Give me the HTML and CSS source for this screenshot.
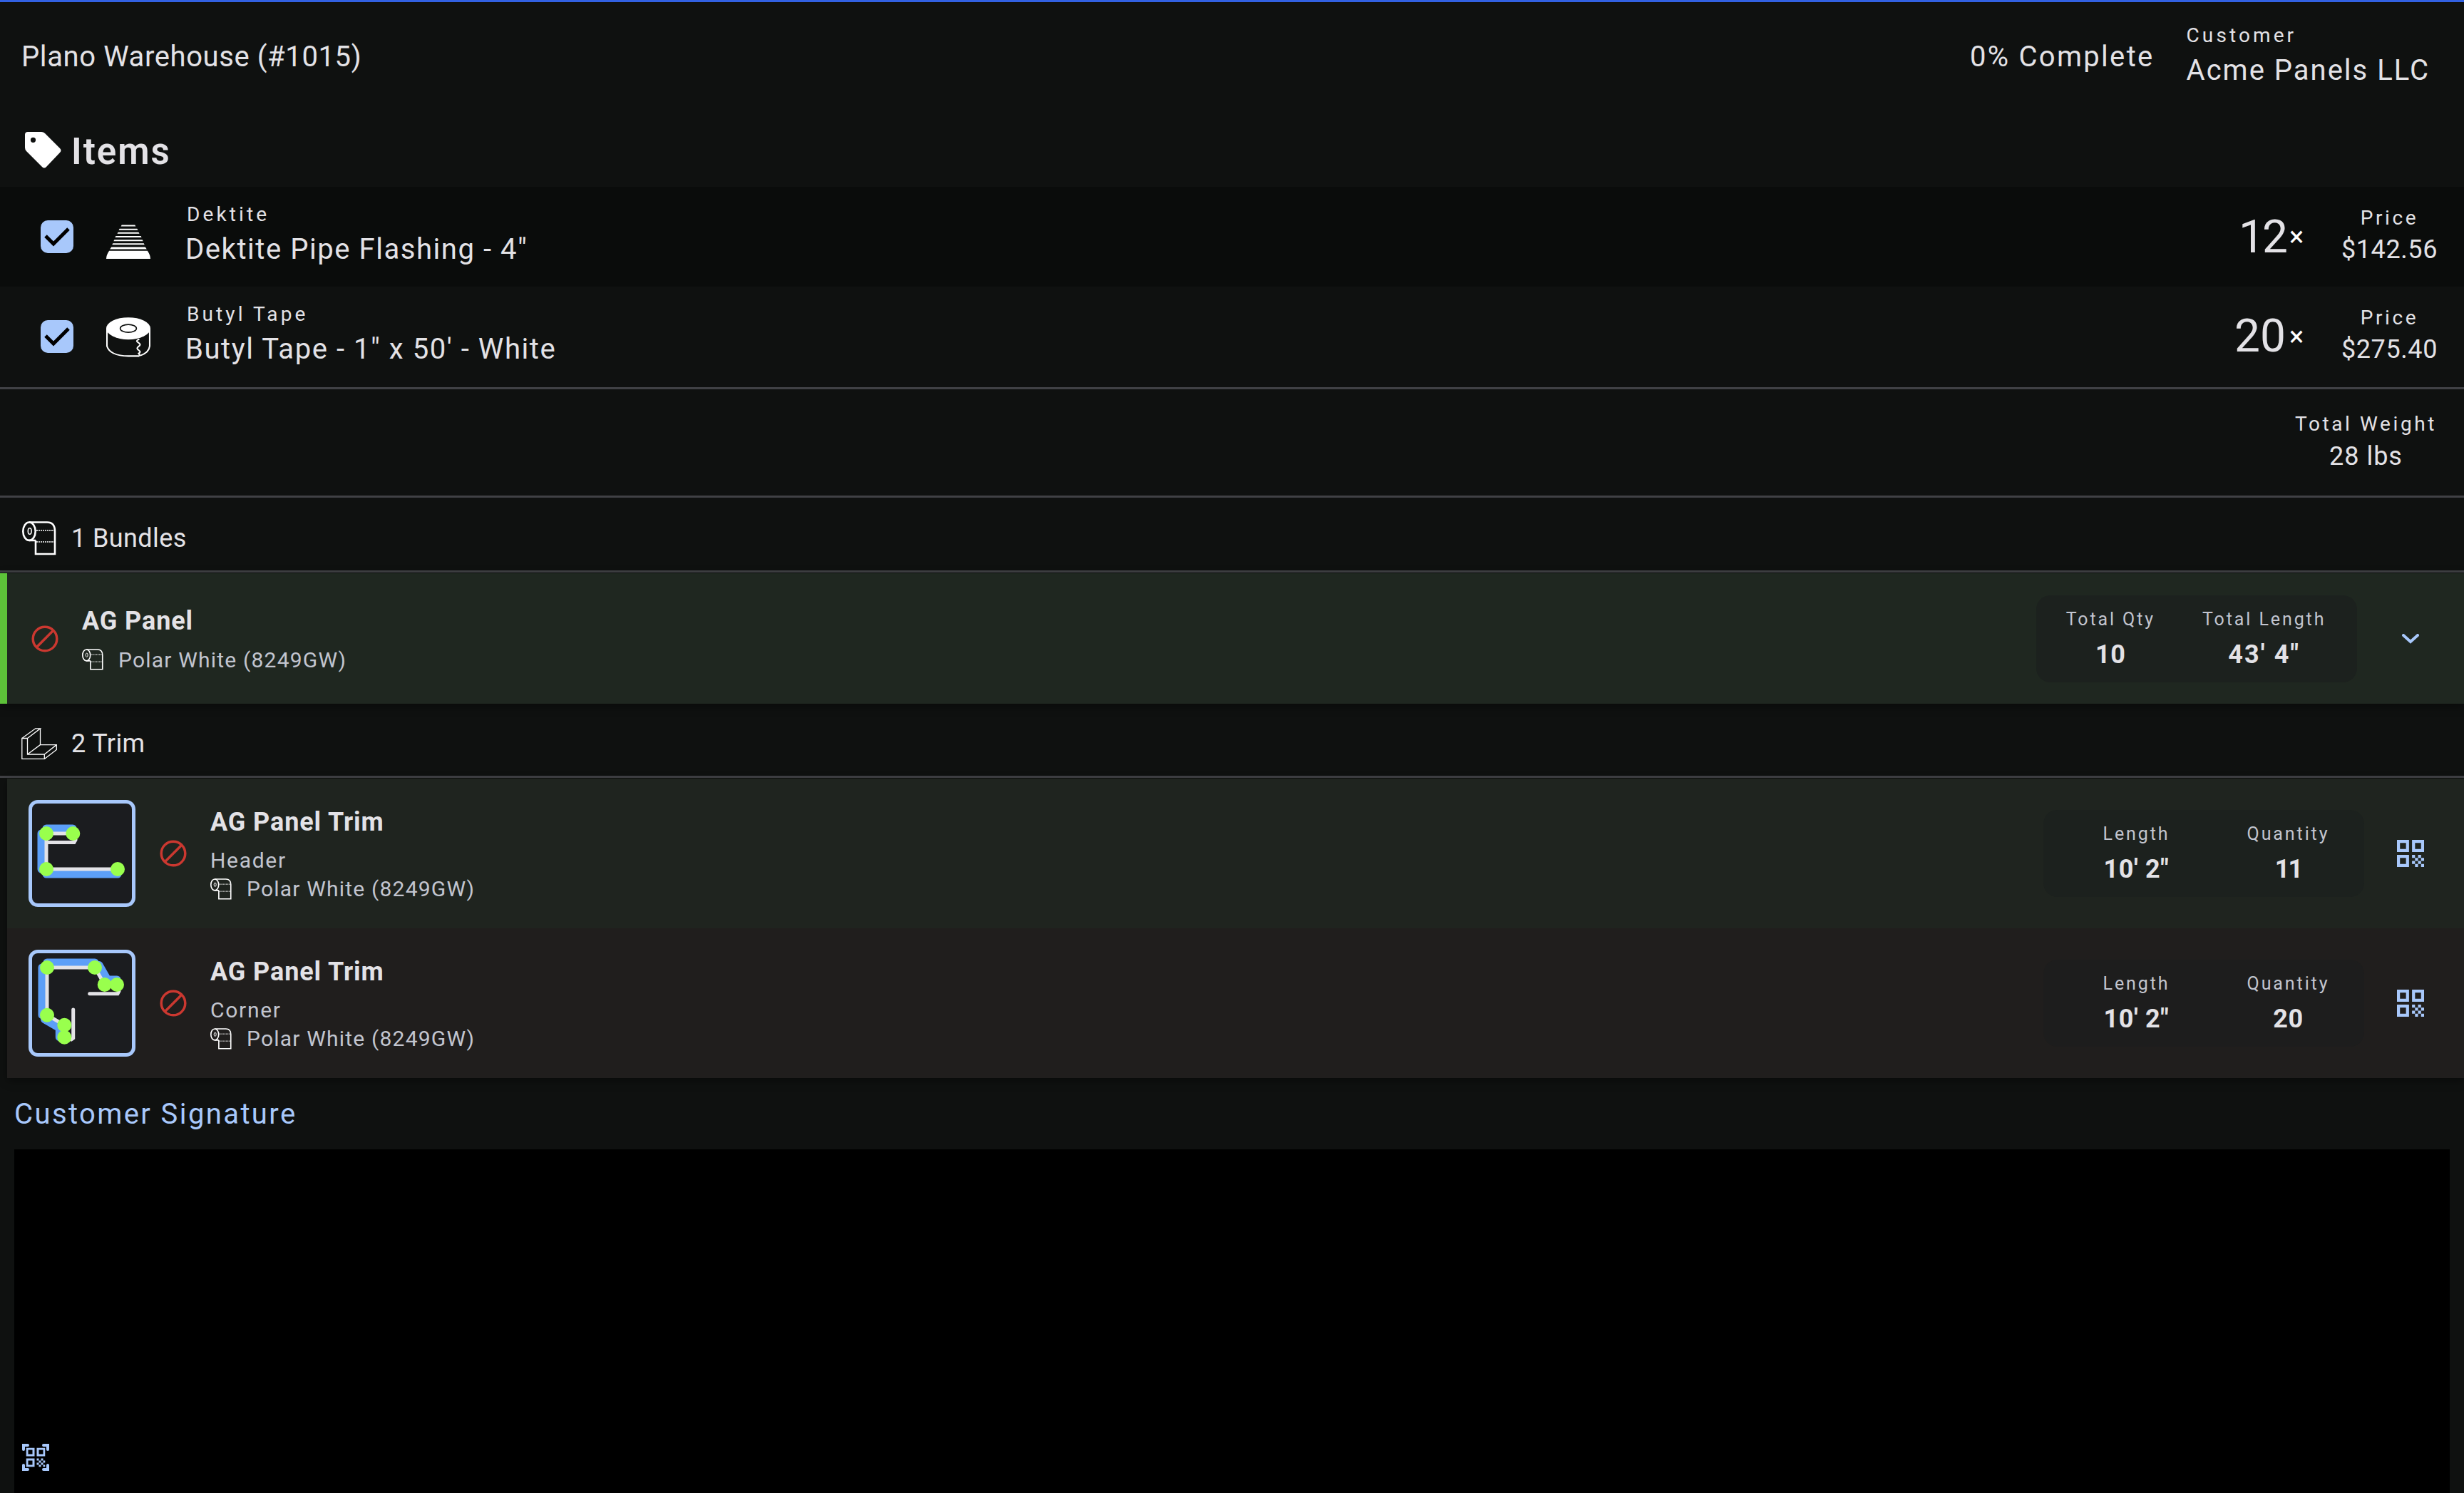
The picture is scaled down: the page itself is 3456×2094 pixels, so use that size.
FILE: index.html
```html
<!DOCTYPE html>
<html lang="en">
<head>
    <meta charset="UTF-8">
    <title>Plano Warehouse (#1015)</title>
    <link rel="stylesheet" href="styles.css">
</head>
<body>
    <svg class="defs" width="0" height="0">
        <symbol id="roll" viewBox="0 0 48 48" fill="none" stroke="#fff">
            <path d="M10 1.500H35Q46 1.500 46 14V46H19V27M10 27H19" stroke-width="2.6"/>
            <ellipse cx="10" cy="14.200" rx="8.700" ry="12.700" stroke-width="2.6"/>
            <ellipse cx="10.700" cy="14" rx="2.4" ry="4.2" stroke-width="1.6"/>
            <path d="M20 13H46M20 29H46" stroke-width="1.6" stroke-dasharray="2 1"/>
        </symbol>
        <symbol id="block" viewBox="0 0 24 24" fill="none" stroke="#cb3830" stroke-width="2.2">
            <circle cx="12" cy="12" r="10.6"/>
            <path d="M4.3 19.7L19.7 4.3"/>
        </symbol>
        <symbol id="qr" viewBox="0 0 18 18">
            <path fill="#a8c8fb" fill-rule="evenodd" d="M0 0h8v8H0zM2 2v4h4V2zM10 0h8v8h-8zM12 2v4h4V2zM0 10h8v8H0zM2 12v4h4v-4zM10 10h2v2h-2zM14 10h2v2h-2zM12 12h2v2h-2zM16 12h2v2h-2zM10 14h2v2h-2zM14 14h2v2h-2zM12 16h2v2h-2zM16 16h2v2h-2z"/>
        </symbol>
    </svg>
    <div class="header">
        <div class="job">Plano Warehouse (#1015)</div>
        <div class="complete">0% Complete</div>
        <div class="customer">
            <div class="label">Customer</div>
            <div class="name">Acme Panels LLC</div>
        </div>
    </div>
    <div class="items-title">
        <svg class="tag" viewBox="0 0 52 52"><path fill="#fff" fill-rule="evenodd" d="M5 1H24Q27 1 29 3L50 24Q53 27 50 30L31 50Q28 53 25 50L3 28Q1 26 1 23V5Q1 1 5 1ZM12.500 8.700A3.600 3.600 0 1 0 12.500 15.900A3.600 3.600 0 1 0 12.500 8.700Z"/></svg>
        <h1>Items</h1>
    </div>
    <div class="item dark">
        <svg class="check" viewBox="0 0 46 46"><rect width="46" height="46" rx="10" fill="#a8c8fb"/><path d="M7 22L18 33L39 12" fill="none" stroke="#000" stroke-width="5"/></svg>
        <svg class="item-icon" viewBox="0 -6 60 60"><path fill="#fff" d="M21 8H39L40 10H20ZM18 13H42L43 15H17ZM16 18H44L45 20H15ZM13 23H47L48 25H12ZM11 28H49L50 30H10ZM9 33H51L52 35H8ZM7 38H53L55 41H5ZM4 43H56Q60 49 60 54H0Q0 49 4 43Z"/></svg>
        <div class="item-text">
            <div class="label">Dektite</div>
            <div class="name">Dektite Pipe Flashing - 4"</div>
        </div>
        <div class="count one">12</div><div class="times">×</div>
        <div class="price"><div class="label">Price</div><div class="value">$142.56</div></div>
    </div>
    <div class="item last">
        <svg class="check" viewBox="0 0 46 46"><rect width="46" height="46" rx="10" fill="#a8c8fb"/><path d="M7 22L18 33L39 12" fill="none" stroke="#000" stroke-width="5"/></svg>
        <svg class="item-icon" viewBox="0 -1 60 60"><ellipse cx="30" cy="18" rx="30" ry="15" fill="#fff"/><ellipse cx="30" cy="18" rx="11" ry="5.3" fill="#fff" stroke="#0f1110" stroke-width="1.6"/><path d="M1 18V42Q5 55 30 55.500H45M46 55Q58 51 59 42V18M44 32v1q-5 2 0 4.500q4 2.500 0 5t0 5q4 2.500 0 4.500l2 3" fill="none" stroke="#fff" stroke-width="2"/></svg>
        <div class="item-text">
            <div class="label">Butyl Tape</div>
            <div class="name">Butyl Tape - 1" x 50' - White</div>
        </div>
        <div class="count">20</div><div class="times">×</div>
        <div class="price"><div class="label">Price</div><div class="value">$275.40</div></div>
    </div>
    <div class="weight">
        <div class="price"><div class="label">Total Weight</div><div class="value">28 lbs</div></div>
    </div>
    <div class="section">
        <svg class="section-icon"><use href="#roll"/></svg>
        <h2>1 Bundles</h2>
    </div>
    <div class="bundle">
        <svg class="block"><use href="#block"/></svg>
        <div class="details">
            <h3>AG Panel</h3>
            <div class="color"><svg><use href="#roll"/></svg><span>Polar White (8249GW)</span></div>
        </div>
        <div class="stats">
            <div class="stat"><div class="stat-label">Total Qty</div><b>10</b></div>
            <div class="stat"><div class="stat-label">Total Length</div><b class="total">43' 4"</b></div>
        </div>
        <svg class="chevron" viewBox="0 0 24 14"><path d="M2 2L12 11L22 2" fill="none" stroke="#a8c8fb" stroke-width="4" stroke-linecap="round"/></svg>
    </div>
    <div class="section trim-title">
        <svg class="section-icon" viewBox="0 0 50 44" fill="none" stroke="#fff" stroke-width="1.3"><path d="M.8 14.500H8.500V37H32.300V43.400H.8ZM.8 14.500L19.700 .8H26.500L8.500 14.500M26.500 .8V23.600L8.500 37M26 23.600H49.300L32.300 37M49.300 23.600V30.500L32.300 43.400"/></svg>
        <h2>2 Trim</h2>
    </div>
    <div class="trims">
        <div class="trim green">
            <svg class="profile" viewBox="0 0 140 140" fill="none" stroke-linecap="round">
                <path d="M20 35H57M13 42V92M20 99H120" stroke="#5c9ff8" stroke-width="11"/>
                <path d="M57 42H20V92H120M20 54.500H59L61 51" stroke="#e3e2e6" stroke-width="5"/>
                <g fill="#99ff4d"><circle cx="20" cy="42" r="10"/><circle cx="57.300" cy="42" r="10"/><circle cx="20" cy="92" r="10"/><circle cx="120" cy="92" r="10"/></g>
            </svg>
            <svg class="block"><use href="#block"/></svg>
            <div class="details">
                <h3>AG Panel Trim</h3>
                <div class="kind">Header</div>
                <div class="color"><svg><use href="#roll"/></svg><span>Polar White (8249GW)</span></div>
            </div>
            <div class="stats">
                <div class="stat"><div class="stat-label">Length</div><b>10' 2"</b></div>
                <div class="stat"><div class="stat-label">Quantity</div><b class="eleven">11</b></div>
            </div>
            <svg class="qr"><use href="#qr"/></svg>
        </div>
        <div class="trim brown">
            <svg class="profile" viewBox="0 0 140 140" fill="none" stroke-linecap="round">
                <path d="M21 13H88M14 20V86.700M94 16.500L107.700 40.500M102 37H119M17.500 92.700L41.700 106.700M38.300 101V117.700" stroke="#5c9ff8" stroke-width="11"/>
                <path d="M119 44H101.700L88 20H21V86.700L45.300 100.700V117.700M80.700 56.700H120L122 53M57.700 79V119L55 121" stroke="#e3e2e6" stroke-width="5"/>
                <g fill="#99ff4d"><circle cx="21" cy="20" r="10"/><circle cx="88" cy="20" r="10"/><circle cx="101.700" cy="44" r="10"/><circle cx="119" cy="44" r="10"/><circle cx="21" cy="86.700" r="10"/><circle cx="45.300" cy="100.700" r="10"/><circle cx="45.300" cy="117.700" r="10"/></g>
            </svg>
            <svg class="block"><use href="#block"/></svg>
            <div class="details">
                <h3>AG Panel Trim</h3>
                <div class="kind">Corner</div>
                <div class="color"><svg><use href="#roll"/></svg><span>Polar White (8249GW)</span></div>
            </div>
            <div class="stats">
                <div class="stat"><div class="stat-label">Length</div><b>10' 2"</b></div>
                <div class="stat"><div class="stat-label">Quantity</div><b>20</b></div>
            </div>
            <svg class="qr"><use href="#qr"/></svg>
        </div>
    </div>
    <h2 class="signature-title">Customer Signature</h2>
    <div class="signature"></div>
    <svg class="scan" viewBox="0 0 38 38"><path d="M2 8V2H8M30 2H36V8M36 30V36H30M8 36H2V30" fill="none" stroke="#a8c8fb" stroke-width="4" stroke-linecap="round"/><use href="#qr" x="5.500" y="5.500" width="27" height="27"/></svg>
</body>
</html>
```

FILE: styles.css
```css
* {
    box-sizing: border-box;
}
body {
    margin: 0;
    height: 2094px;
    overflow: hidden;
    display: flex;
    flex-direction: column;
    border-top: 3px solid #3261e2;
    background: #0f1110;
    color: #e3e2e6;
    font-family: Roboto, sans-serif;
    white-space: nowrap;
}
body > * {
    flex-shrink: 0;
}
h1, h2, h3 {
    margin: 0;
}
.defs {
    position: absolute;
}
.header {
    display: flex;
    align-items: center;
    height: 153px;
    padding: 0 48px 0 30px;
    font-size: 40px;
}
.job {
    flex: 1;
    letter-spacing: 0.6px;
}
.complete {
    margin-right: 45px;
    letter-spacing: 2.3px;
}
.label {
    font-size: 28px;
    line-height: 36px;
    letter-spacing: 4.1px;
}
.name {
    font-size: 40px;
    line-height: 61px;
    letter-spacing: 1.55px;
}
.customer {
    padding-top: 2px;
}
.customer .name {
    letter-spacing: 2px;
}
.items-title {
    display: flex;
    align-items: center;
    height: 106px;
    padding: 6px 34px 0;
    gap: 14px;
}
.tag {
    width: 52px;
    height: 52px;
    margin-bottom: 4px;
}
h1 {
    font-size: 51px;
    font-weight: 600;
    letter-spacing: 2px;
}
.item {
    display: flex;
    align-items: center;
    height: 140px;
    padding: 0 37px 0 57px;
}
.dark {
    background: #0a0c0b;
}
.last {
    height: 141px;
    padding-bottom: 2px;
}
.check {
    width: 46px;
    height: 46px;
}
.item-icon {
    width: 62px;
    height: 62px;
    margin: 0 49px 0 46px;
}
.item-text {
    flex: 1;
}
.item-text .label {
    padding-left: 2px;
    margin-top: -1px;
}
.count {
    font-size: 64px;
}
.one {
    letter-spacing: -3px;
}
.times {
    width: 22px;
    margin: 0 51px 0 5px;
    color: #fff;
    font-size: 38px;
}
.price {
    text-align: center;
}
.price .label {
    letter-spacing: 3.6px;
}
.value {
    font-size: 36px;
    line-height: 52px;
    letter-spacing: 0.6px;
}
.weight {
    display: flex;
    justify-content: flex-end;
    align-items: center;
    height: 155px;
    padding: 3px 38px 0 0;
    border-top: 3px solid #404145;
    border-bottom: 3px solid #404145;
}
.weight .value {
    line-height: 54px;
    letter-spacing: 1px;
}
.section {
    display: flex;
    align-items: center;
    height: 105px;
    margin-bottom: 1px;
    padding: 11px 0 0 30px;
    gap: 20px;
    border-bottom: 3px solid #404145;
}
.trim-title {
    height: 104px;
}
.section-icon {
    width: 50px;
    height: 48px;
}
h2 {
    font-size: 36px;
    font-weight: 400;
    letter-spacing: 0.4px;
}
.bundle {
    display: flex;
    align-items: center;
    height: 183px;
    padding-left: 34px;
    border-left: 10px solid #5dc239;
    background: #1f2720;
    box-shadow: 0 4px 12px rgba(0, 0, 0, 0.4);
}
.block {
    width: 38px;
    height: 38px;
}
.details {
    flex: 1;
    padding-left: 33px;
}
h3 {
    margin-bottom: 10px;
    padding-top: 1px;
    font-size: 36px;
    line-height: 48px;
    font-weight: 700;
    letter-spacing: 0.9px;
}
.color {
    display: flex;
    align-items: center;
    gap: 21px;
    height: 40px;
    color: #c2c5cf;
    font-size: 30px;
    letter-spacing: 1.2px;
}
.color svg {
    width: 30px;
    height: 30px;
}
.stats {
    display: flex;
    justify-content: center;
    gap: 66px;
    width: 450px;
    height: 122px;
    padding: 16px 2px 0 0;
    border-radius: 20px;
    background: #1c211e;
}
.stat {
    text-align: center;
}
.stat-label {
    margin-bottom: 4px;
    color: #c2c5cf;
    font-size: 25px;
    line-height: 36px;
    letter-spacing: 2.9px;
}
.stat b {
    font-size: 36px;
    line-height: 54px;
    letter-spacing: 0.6px;
}
.stat .total {
    letter-spacing: 2.1px;
}
.stat .eleven {
    letter-spacing: -2px;
}
.chevron {
    width: 24px;
    height: 14px;
    margin: 1px 63px 0;
}
.trims {
    margin-left: 10px;
    box-shadow: 0 4px 12px rgba(0, 0, 0, 0.4);
}
.trim {
    display: flex;
    align-items: center;
    height: 210px;
    padding-left: 30px;
}
.trim .stats {
    gap: 0;
    padding: 16px 0 0 24px;
}
.trim .stat {
    flex: 1;
}
.green {
    background: #1f241f;
}
.brown {
    background: #201e1d;
}
.brown .stats {
    background: #1d1d1d;
}
.profile {
    width: 150px;
    height: 150px;
    margin-right: 34px;
    border: 5px solid #a8c8fb;
    border-radius: 13px;
    background: #1b1c1f;
}
.kind {
    color: #c2c5cf;
    font-size: 30px;
    line-height: 40px;
    letter-spacing: 1.7px;
}
.qr {
    width: 38px;
    height: 38px;
    margin: 0 56px 0 46px;
}
.signature-title {
    padding-left: 20px;
    height: 100px;
    line-height: 101px;
    color: #a8c8fb;
    font-size: 40px;
    letter-spacing: 2.4px;
}
.signature {
    flex: 1;
    margin: 0 20px;
    background: #000;
}
.scan {
    position: absolute;
    left: 31px;
    top: 2025px;
    width: 38px;
    height: 38px;
}
```
